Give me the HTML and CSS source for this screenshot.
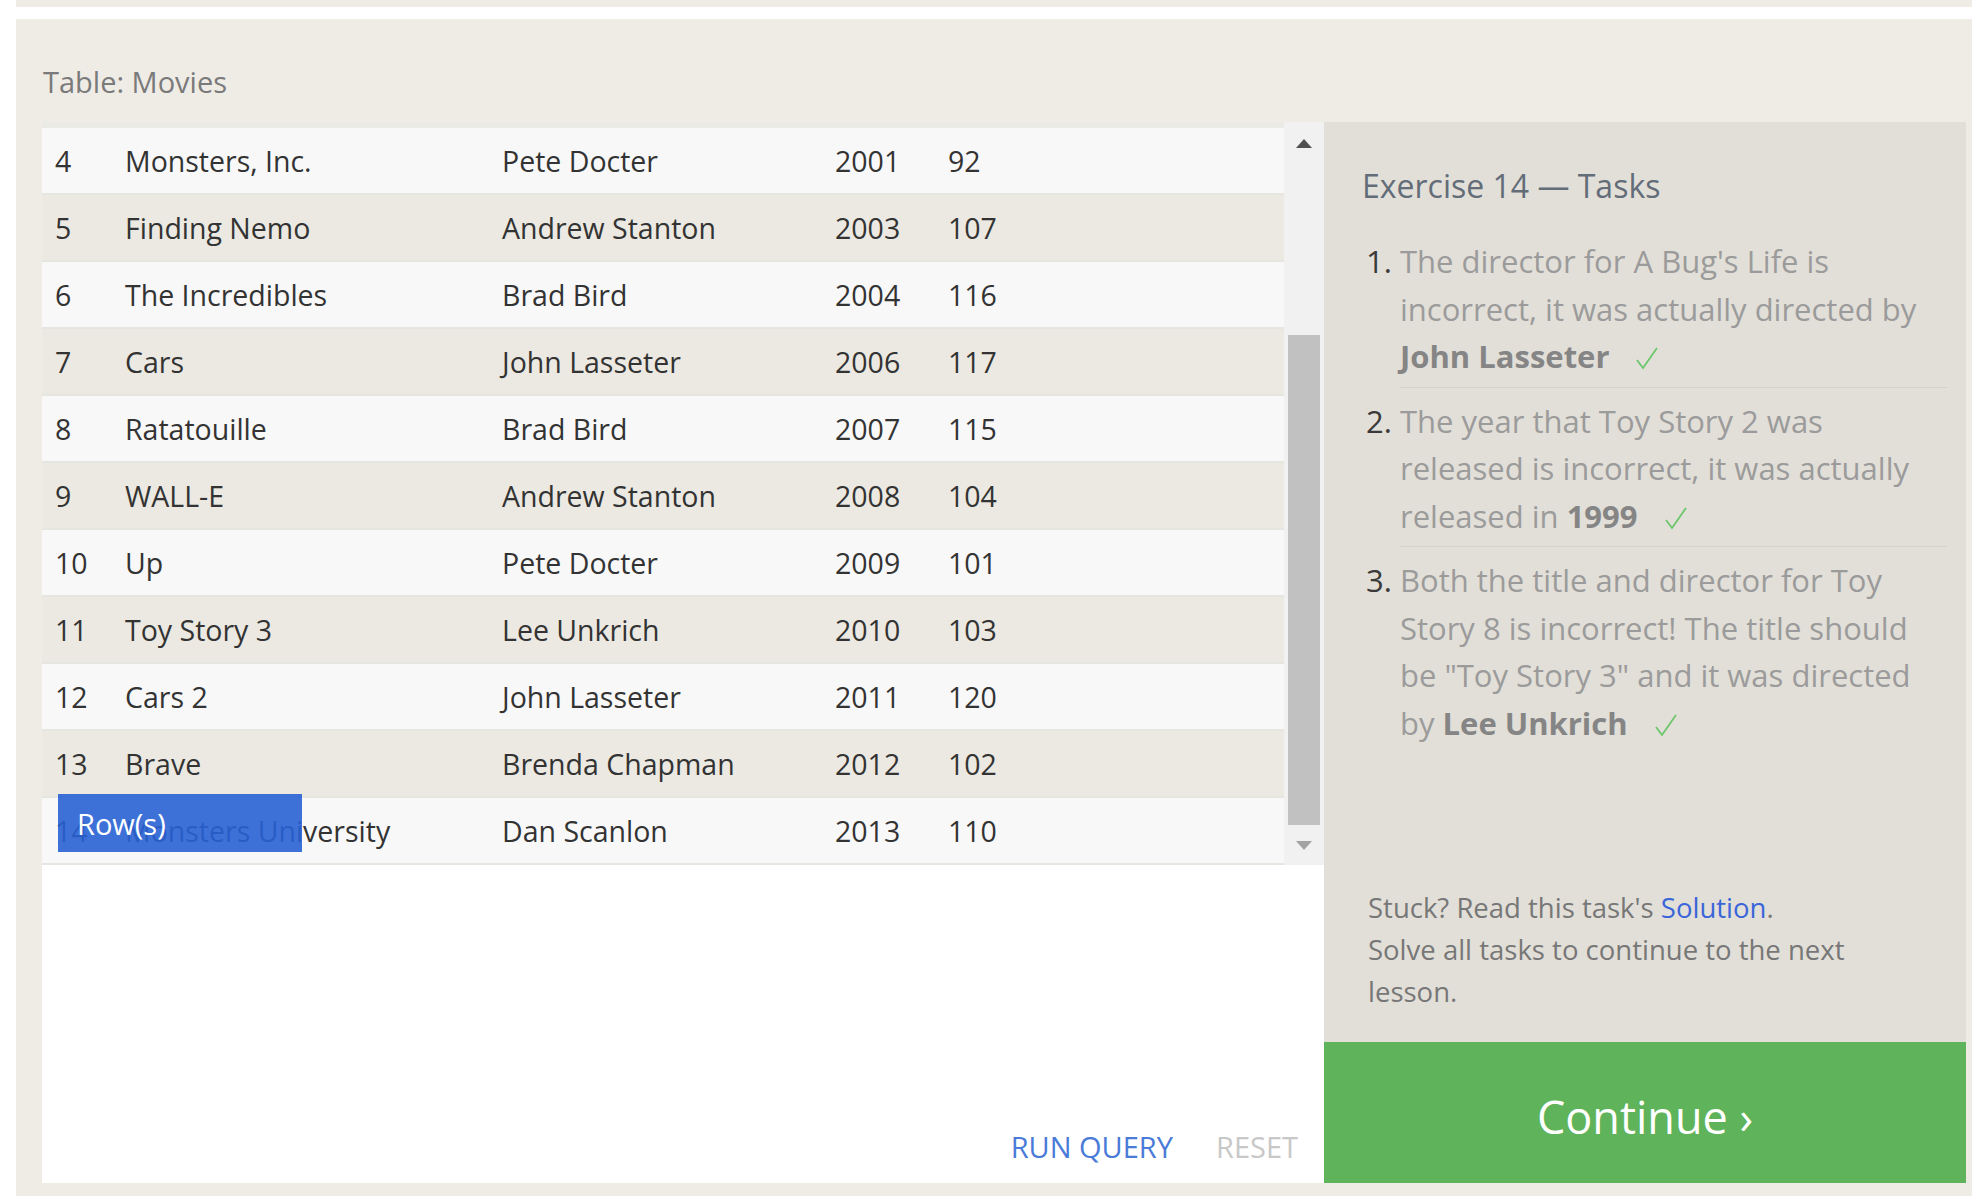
FILE: index.html
```html
<!DOCTYPE html>
<html lang="en">
<head>
<meta charset="utf-8">
<title>SQL Lesson – Exercise 14</title>
<link rel="stylesheet" href="styles.css">
</head>
<body>
<div class="topstrip"></div>
<main class="page">
  <h2 class="table-title">Table: Movies</h2>
  <div class="workspace">
    <section class="results">
      <div class="table-frame">
        <div class="table-scroll">
          <div class="row"><span>4</span><span>Monsters, Inc.</span><span>Pete Docter</span><span>2001</span><span>92</span></div>
          <div class="row alt"><span>5</span><span>Finding Nemo</span><span>Andrew Stanton</span><span>2003</span><span>107</span></div>
          <div class="row"><span>6</span><span>The Incredibles</span><span>Brad Bird</span><span>2004</span><span>116</span></div>
          <div class="row alt"><span>7</span><span>Cars</span><span>John Lasseter</span><span>2006</span><span>117</span></div>
          <div class="row"><span>8</span><span>Ratatouille</span><span>Brad Bird</span><span>2007</span><span>115</span></div>
          <div class="row alt"><span>9</span><span>WALL-E</span><span>Andrew Stanton</span><span>2008</span><span>104</span></div>
          <div class="row"><span>10</span><span>Up</span><span>Pete Docter</span><span>2009</span><span>101</span></div>
          <div class="row alt"><span>11</span><span>Toy Story 3</span><span>Lee Unkrich</span><span>2010</span><span>103</span></div>
          <div class="row"><span>12</span><span>Cars 2</span><span>John Lasseter</span><span>2011</span><span>120</span></div>
          <div class="row alt"><span>13</span><span>Brave</span><span>Brenda Chapman</span><span>2012</span><span>102</span></div>
          <div class="row"><span>14</span><span>Monsters University</span><span>Dan Scanlon</span><span>2013</span><span>110</span></div>
          <div class="tooltip">Row(s)</div>
        </div>
        <div class="scrollbar">
          <div class="sb-btn"><span class="tri-up"></span></div>
          <div class="sb-thumb"></div>
          <div class="sb-btn sb-end"><span class="tri-down"></span></div>
        </div>
      </div>
      <div class="actions">
        <span class="run">RUN QUERY</span>
        <span class="reset">RESET</span>
      </div>
    </section>
    <aside class="tasks">
      <div class="tasks-body">
        <h2 class="tasks-title">Exercise 14 — Tasks</h2>
        <ol class="task-list">
          <li>The director for A Bug's Life is incorrect, it was actually directed by <b>John Lasseter</b><svg class="check" viewBox="0 0 24 24" width="24" height="24"><polyline points="2,14 8,22 22,2"/></svg></li>
          <li>The year that Toy Story 2 was released is incorrect, it was actually released in <b>1999</b><svg class="check" viewBox="0 0 24 24" width="24" height="24"><polyline points="2,14 8,22 22,2"/></svg></li>
          <li>Both the title and director for Toy Story 8 is incorrect! The title should be "Toy Story 3" and it was directed by <b>Lee Unkrich</b><svg class="check" viewBox="0 0 24 24" width="24" height="24"><polyline points="2,14 8,22 22,2"/></svg></li>
        </ol>
      </div>
      <div class="help">
        <p>Stuck? Read this task's <a class="link">Solution</a>.</p>
        <p>Solve all tasks to continue to the next lesson.</p>
      </div>
      <div class="continue">Continue ›</div>
    </aside>
  </div>
</main>
</body>
</html>
```
FILE: styles.css
```css
* { box-sizing: border-box; }

html, body {
  margin: 0;
  background: #ffffff;
  font-family: "Open Sans", "Noto Sans", sans-serif;
}

.topstrip {
  height: 7px;
  margin-left: 16px;
  background: #efece6;
}

.page {
  margin: 12px 0 0 16px;
  height: 1177px;
  background: #efece6;
  padding: 43px 6px 13px 26px;
  display: flex;
  flex-direction: column;
}

.table-title {
  margin: 0;
  font-size: 29px;
  line-height: 40px;
  font-weight: 400;
  color: #7a7a7a;
  padding-left: 1px;
}

.workspace {
  margin-top: 20px;
  flex: 1;
  display: flex;
}

.results {
  flex: 1;
  background: #ffffff;
  display: flex;
  flex-direction: column;
}

.table-frame {
  display: flex;
  height: 743px;
}

.table-scroll {
  flex: 1;
  position: relative;
  background: #ebebe5;
  padding-top: 6px;
}

.row {
  display: grid;
  grid-template-columns: 70px 377px 333px 113px 1fr;
  align-items: center;
  height: 67px;
  padding-left: 13px;
  background: #f8f8f8;
  border-bottom: 2px solid #e6e6e1;
  font-size: 28.5px;
  color: #333333;
  white-space: nowrap;
}

.row.alt {
  background: #ebe9e2;
}

.tooltip {
  position: absolute;
  left: 16px;
  top: 672px;
  width: 244px;
  height: 58px;
  padding-left: 19px;
  display: flex;
  align-items: center;
  background: rgba(40, 98, 212, 0.9);
  color: #ffffff;
  font-size: 29px;
}

.scrollbar {
  width: 40px;
  background: #f1f1f1;
  display: flex;
  flex-direction: column;
  align-items: center;
}

.sb-btn {
  height: 42px;
  width: 100%;
  display: flex;
  align-items: center;
  justify-content: center;
}

.sb-end {
  height: auto;
  flex: 1;
}

.tri-up {
  width: 0;
  height: 0;
  border-left: 8.5px solid transparent;
  border-right: 8.5px solid transparent;
  border-bottom: 9px solid #505050;
}

.tri-down {
  width: 0;
  height: 0;
  border-left: 8.5px solid transparent;
  border-right: 8.5px solid transparent;
  border-top: 9px solid #a3a3a3;
}

.sb-thumb {
  margin-top: 171px;
  width: 32px;
  height: 490px;
  background: #c1c1c1;
}

.actions {
  margin-top: auto;
  display: flex;
  justify-content: flex-end;
  gap: 43px;
  padding: 0 26px 16px 0;
  font-size: 29px;
  line-height: 40px;
}

.run { color: #4a7bd8; }
.reset { color: #c8c8c8; }

.tasks {
  width: 642px;
  background: #e2dfd8;
  display: flex;
  flex-direction: column;
}

.tasks-body {
  padding: 44px 19px 0 38px;
}

.tasks-title {
  margin: 0 0 32px;
  font-size: 32px;
  line-height: 40px;
  font-weight: 400;
  color: #636d78;
}

.task-list {
  margin: 0;
  padding: 0 0 0 38px;
  font-size: 31px;
  line-height: 47.5px;
  color: #9b9b9b;
}

.task-list li {
  padding: 10px 0 6px;
  border-bottom: 1px solid #d6d3ca;
}

.task-list li:first-child { padding-top: 0; }
.task-list li:last-child { border-bottom: none; }

.task-list li::marker {
  color: #3a3a3a;
}

.task-list b {
  color: #858585;
  font-weight: 700;
}

.check {
  width: 24px;
  height: 24px;
  margin-left: 26px;
  vertical-align: -2px;
  fill: none;
  stroke: #6cc66c;
  stroke-width: 1.8;
}

.help {
  margin-top: auto;
  padding: 0 40px 29px 44px;
  font-size: 27.5px;
  line-height: 42px;
  color: #777777;
}

.help p { margin: 0; }

.link { color: #3b66d9; }

.continue {
  height: 141px;
  background: #5fb35b;
  color: #ffffff;
  font-size: 45px;
  display: flex;
  align-items: center;
  justify-content: center;
  padding-top: 8px;
}
```
